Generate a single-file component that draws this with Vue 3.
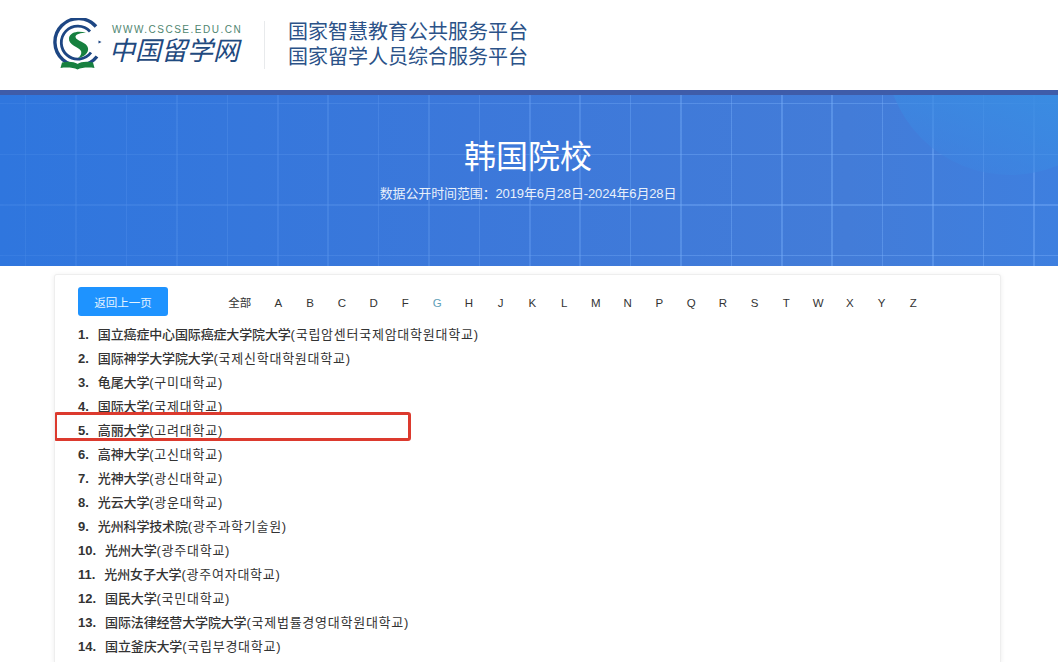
<template>
  <div class="page">
    <header class="top">
      <div class="logo">
        <svg class="logo-mark" viewBox="0 0 52 54" width="52" height="54">
          <path d="M44 8.500A23.500 23.500 0 1 0 45 38.500" fill="none" stroke="#1d4683" stroke-width="3.400" />
          <path d="M38 13.500A16.500 16.500 0 1 0 39 34.500" fill="none" stroke="#1d4683" stroke-width="2.800" />
          <path d="M46.500 22.500l3 1.500-3 1.500z" fill="#1d4683" />
          <path d="M34 15C27 12.500 18 14 17 20C16 27 27 29 29 33C30 36 28 38.500 26 40C32 39 37 35 36 30C35 24 24 23 23.500 19C23.200 16.500 28 14.500 34 15Z" fill="#17803f" />
          <path d="M10 44.500c6-1.500 12-1 15.500 1.500 3.500-2.500 9.500-3 15.500-1.500l1.500 5.500c-6-1-13-.5-17 1.500-4-2-11-2.500-17-1.500z" fill="#17803f" />
        </svg>
        <div class="logo-text">
          <div class="logo-url">WWW.CSCSE.EDU.CN</div>
          <div class="logo-name">中国留学网</div>
        </div>
      </div>
      <div class="platforms">
        <div>国家智慧教育公共服务平台</div>
        <div>国家留学人员综合服务平台</div>
      </div>
    </header>

    <section class="hero">
      <div class="hero-grid"></div>
      <div class="hero-circle"></div>
      <h1>韩国院校</h1>
      <p>数据公开时间范围：2019年6月28日-2024年6月28日</p>
    </section>

    <main class="card">
      <div class="toolbar">
        <button class="back">返回上一页</button>
        <nav class="letters">
          <a class="all">全部</a>
          <a
            v-for="letter in letters"
            :key="letter"
            :class="{ active: letter === activeLetter }"
          >{{ letter }}</a>
        </nav>
      </div>
      <ol class="schools">
        <li v-for="(school, index) in schools" :key="school.cn">
          <span class="num">{{ index + 1 }}.</span>
          <span class="cn">{{ school.cn }}</span><span class="ko">({{ school.ko }})</span>
          <div v-if="index === 4" class="mark"></div>
        </li>
      </ol>
    </main>
  </div>
</template>

<script setup>
const activeLetter = 'G'

const letters = ['A', 'B', 'C', 'D', 'F', 'G', 'H', 'J', 'K', 'L', 'M', 'N', 'P', 'Q', 'R', 'S', 'T', 'W', 'X', 'Y', 'Z']

const schools = [
  { cn: '国立癌症中心国际癌症大学院大学', ko: '국립암센터국제암대학원대학교' },
  { cn: '国际神学大学院大学', ko: '국제신학대학원대학교' },
  { cn: '龟尾大学', ko: '구미대학교' },
  { cn: '国际大学', ko: '국제대학교' },
  { cn: '高丽大学', ko: '고려대학교' },
  { cn: '高神大学', ko: '고신대학교' },
  { cn: '光神大学', ko: '광신대학교' },
  { cn: '光云大学', ko: '광운대학교' },
  { cn: '光州科学技术院', ko: '광주과학기술원' },
  { cn: '光州大学', ko: '광주대학교' },
  { cn: '光州女子大学', ko: '광주여자대학교' },
  { cn: '国民大学', ko: '국민대학교' },
  { cn: '国际法律经营大学院大学', ko: '국제법률경영대학원대학교' },
  { cn: '国立釜庆大学', ko: '국립부경대학교' }
]
</script>

<style>
html,
body {
  margin: 0;
  background: #fff;
}
</style>

<style scoped>
.page {
  font-family: "Liberation Sans", "Noto Sans CJK SC", sans-serif;
  color: #333;
}

.top {
  height: 90px;
  display: flex;
  align-items: center;
  padding-left: 52px;
  box-sizing: border-box;
}

.logo {
  display: flex;
  align-items: center;
  gap: 8px;
  width: 212px;
  border-right: 1px solid #e8eaec;
  height: 48px;
}

.logo-mark {
  flex: none;
}

.logo-url {
  font-size: 10px;
  line-height: 12px;
  letter-spacing: 1.500px;
  color: #4f8570;
  white-space: nowrap;
}

.logo-name {
  margin-left: -3px;
  font-size: 26px;
  line-height: 30px;
  font-style: italic;
  color: #1f4a80;
  white-space: nowrap;
}

.platforms {
  margin-left: 23px;
  font-size: 20px;
  line-height: 25px;
  color: #2b5288;
  white-space: nowrap;
}

.hero {
  position: relative;
  height: 171px;
  padding-right: 2px;
  overflow: hidden;
  border-top: 5px solid #3f5ca9;
  text-align: center;
  color: #fff;
  background: linear-gradient(90deg, #2f76de 0%, #3c78da 45%, #437cd8 80%, #3e7fdf 100%);
}

.hero-grid {
  position: absolute;
  inset: 0;
  background-image:
    repeating-linear-gradient(90deg, transparent 0 25px, rgba(120, 175, 250, 0.42) 25px 26.500px, transparent 26.500px 50.400px),
    repeating-linear-gradient(180deg, transparent 0 8px, rgba(120, 175, 250, 0.42) 8px 9.500px, transparent 9.500px 50.500px);
  -webkit-mask-image: linear-gradient(90deg, rgba(0, 0, 0, 0.3) 0%, rgba(0, 0, 0, 0.55) 40%, #000 70%);
  mask-image: linear-gradient(90deg, rgba(0, 0, 0, 0.3) 0%, rgba(0, 0, 0, 0.55) 40%, #000 70%);
}

.hero-circle {
  position: absolute;
  left: 885px;
  top: -170px;
  width: 250px;
  height: 250px;
  border-radius: 50%;
  background: linear-gradient(200deg, rgba(58, 140, 226, 0.95) 60%, rgba(62, 130, 226, 0.3) 95%);
}

.hero h1 {
  position: relative;
  margin: 0;
  padding-top: 40px;
  font-size: 32px;
  line-height: 44px;
  font-weight: 400;
}

.hero p {
  position: relative;
  margin: 5px 0 0;
  font-size: 13px;
  line-height: 20px;
  letter-spacing: -0.130px;
  color: #e8f0fb;
}

.card {
  margin: 8px 57px 0 54px;
  padding: 12px 24px 4px 23px;
  height: 388px;
  box-sizing: border-box;
  border: 1px solid #eeeeee;
  border-bottom: none;
  border-radius: 3px 3px 0 0;
  box-shadow: 0 1px 5px rgba(0, 0, 0, 0.08);
  overflow: hidden;
}

.toolbar {
  display: flex;
  align-items: center;
}

.back {
  width: 90px;
  height: 29px;
  padding: 0;
  border: none;
  border-radius: 3px;
  background: #1e93ff;
  color: #e6f4ff;
  font-family: inherit;
  font-size: 11.500px;
}

.letters {
  display: flex;
  margin-left: 49px;
  padding-top: 2px;
  font-size: 11.500px;
  line-height: 16px;
  color: #333;
}

.letters a {
  width: 31.750px;
  text-align: center;
}

.letters a.all {
  width: 45.500px;
}

.letters a.active {
  color: #5f9fb8;
}

.schools {
  list-style: none;
  margin: 7px 0 0;
  padding: 0;
}

.schools li {
  position: relative;
  height: 24px;
  line-height: 24px;
  font-size: 13px;
  white-space: nowrap;
}

.num {
  font-weight: 700;
  margin-right: 9px;
}

.cn {
  font-weight: 500;
  letter-spacing: -0.150px;
}

.ko {
  font-family: "Liberation Sans", "Noto Sans CJK KR", sans-serif;
  letter-spacing: 0.750px;
}

.mark {
  position: absolute;
  left: -24px;
  top: -7px;
  width: 351px;
  height: 23px;
  border: 3px solid #dc3a2e;
  border-radius: 3px;
}
</style>
